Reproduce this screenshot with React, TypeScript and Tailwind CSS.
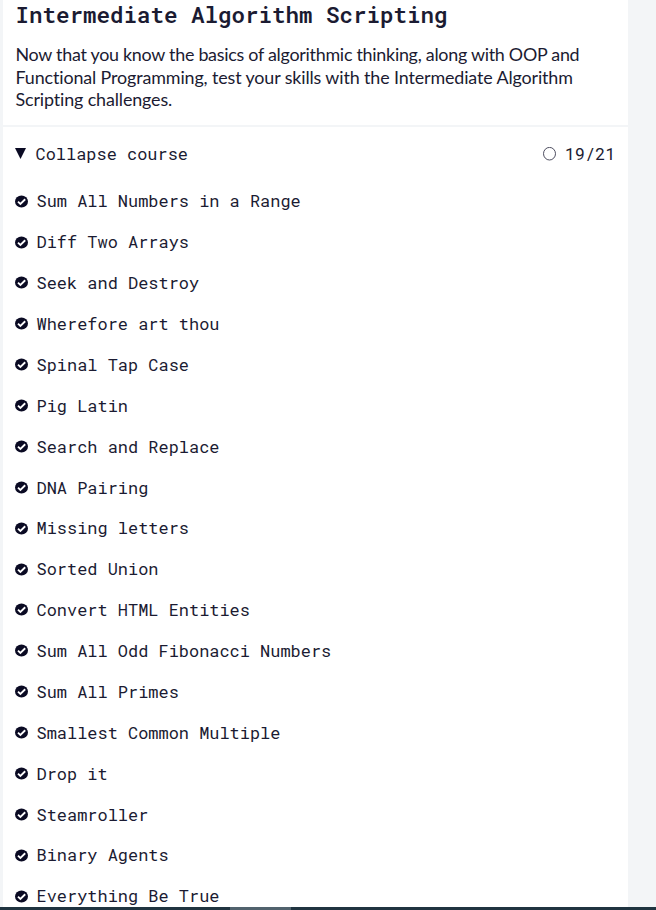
const challenges = [
  'Sum All Numbers in a Range',
  'Diff Two Arrays',
  'Seek and Destroy',
  'Wherefore art thou',
  'Spinal Tap Case',
  'Pig Latin',
  'Search and Replace',
  'DNA Pairing',
  'Missing letters',
  'Sorted Union',
  'Convert HTML Entities',
  'Sum All Odd Fibonacci Numbers',
  'Sum All Primes',
  'Smallest Common Multiple',
  'Drop it',
  'Steamroller',
  'Binary Agents',
  'Everything Be True',
];

function PassedIcon() {
  return (
    <svg className="h-[13px] w-[13px] shrink-0" viewBox="0 0 13 13" aria-hidden="true">
      <ellipse cx="6.5" cy="6.6" rx="6.5" ry="6" fill="#0a0a23" />
      <path d="M3 6.6 5.4 8.9 10.2 4.3" fill="none" stroke="#fff" strokeWidth="1.9" />
    </svg>
  );
}

export default function App() {
  return (
    <div className="flex h-[910px] w-[656px] flex-col overflow-hidden bg-[#f3f5f7] text-[#1b1b32]">
      <main className="ml-[3px] flex h-[907px] w-[625px] shrink-0 flex-col overflow-hidden bg-white font-['Roboto_Mono','DejaVu_Sans_Mono',monospace]">
        <header className="h-[125px] shrink-0 pl-[12.5px]">
          <h1 className="h-[43px] whitespace-nowrap text-[22.5px] leading-[28px] font-semibold">
            Intermediate Algorithm Scripting
          </h1>
          <p className="w-[600px] font-[Lato,sans-serif] text-[17.9px] leading-[22.7px] whitespace-nowrap [font-variant-ligatures:none]">
            <span className="tracking-[-0.27px]">
              Now that you know the basics of algorithmic thinking, along with OOP and
            </span>
            <br />
            <span className="tracking-[-0.125px]">
              Functional Programming, test your skills with the Intermediate Algorithm
            </span>
            <br />
            <span className="tracking-[-0.13px]">Scripting challenges.</span>
          </p>
        </header>
        <div className="flex h-[56px] shrink-0 items-center border-t-2 border-[#f3f5f7] pr-[12.5px] pl-[12px] text-[16.94px]">
          <svg className="mb-px h-[11px] w-[11px]" viewBox="0 0 11 11" aria-hidden="true">
            <path d="M0 0H11L5.5 11Z" fill="#0a0a23" />
          </svg>
          <span className="ml-[9.5px]">Collapse course</span>
          <svg className="ml-auto h-[14px] w-[13px]" viewBox="0 0 13 14" aria-hidden="true">
            <ellipse cx="6.5" cy="6.7" rx="6" ry="6.3" fill="none" stroke="#3b3b4f" strokeWidth="0.9" />
          </svg>
          <span className="ml-[8.5px]">19/21</span>
        </div>
        <ul className="-mt-[0.28px] shrink-0 pl-[12px]">
          {challenges.map((name) => (
            <li key={name} className="flex h-[40.88px] items-center text-[16.94px] whitespace-nowrap">
              <PassedIcon />
              <span className="ml-[8.5px]">{name}</span>
            </li>
          ))}
        </ul>
      </main>
      <footer className="h-[3px] shrink-0 bg-[#203440] pl-[230px]">
        <div className="h-[3px] w-[61px] bg-[#51626d]" />
      </footer>
    </div>
  );
}
